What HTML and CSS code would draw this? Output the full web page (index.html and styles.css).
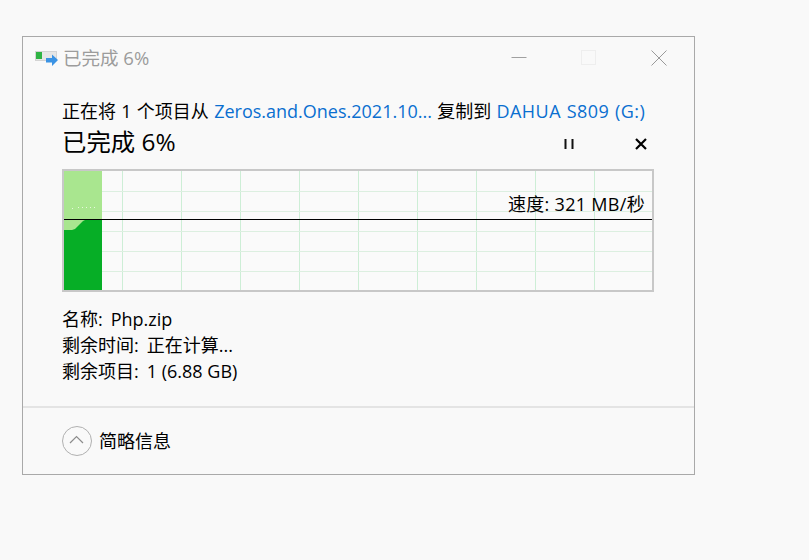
FILE: index.html
```html
<!DOCTYPE html>
<html lang="zh">
<head>
<meta charset="utf-8">
<title>已完成 6%</title>
<link rel="stylesheet" href="styles.css">
</head>
<body>
<div class="window">
  <header class="titlebar">
    <svg class="app-icon" width="24" height="18" viewBox="0 0 24 18">
      <rect x="0.5" y="1.5" width="21" height="9" fill="#e6e6e6" stroke="#d4d4d4"/>
      <rect x="1" y="2" width="6" height="7" fill="#2fb344"/>
      <path d="M11 8h6V4.500l6 5.500-6 6v-3.500h-6z" fill="#3b93e4"/>
    </svg>
    <span class="title-text">已完成 6%</span>
    <div class="win-controls">
      <svg width="16" height="16" viewBox="0 0 16 16"><path d="M0.500 7.500h15" stroke="#a0a0a0" fill="none"/></svg>
      <svg width="16" height="16" viewBox="0 0 16 16"><rect x="0.500" y="0.500" width="14" height="14" stroke="#eeeeee" fill="none"/></svg>
      <svg width="16" height="16" viewBox="0 0 16 16"><path d="M0.500 0.500l15 15M15.500 0.500l-15 15" stroke="#9a9a9a" fill="none"/></svg>
    </div>
  </header>
  <main class="body">
    <p class="copy-line">正在将 1 个项目从 <a class="link">Zeros.and.Ones.2021.10...</a> 复制到 <a class="link link-drive">DAHUA S809 (G:)</a></p>
    <div class="progress-head">
      <span class="progress-title">已完成 6%</span>
      <div class="actions">
        <svg width="12" height="12" viewBox="0 0 12 12"><path d="M2.500 1v10M9.500 1v10" stroke="#111" stroke-width="2" fill="none"/></svg>
        <svg width="14" height="14" viewBox="0 0 14 14"><path d="M2 2l10 10M12 2L2 12" stroke="#000" stroke-width="2.200" fill="none"/></svg>
      </div>
    </div>
    <div class="chart">
      <svg class="chart-svg" width="588" height="119" viewBox="0 0 588 119">
        <g fill="none">
          <path d="M58.500 0v119M117.500 0v119M176.500 0v119M235.500 0v119M294.500 0v119M353.500 0v119M412.500 0v119M471.500 0v119M530.500 0v119" stroke="#cdeed6"/>
          <path d="M0 20.500h588M0 40.500h588M0 60.500h588M0 80.500h588M0 100.500h588" stroke="#dcefe0"/>
        </g>
        <rect x="0" y="0" width="38" height="119" fill="#a9e68f"/>
        <path d="M0 59h8l3-1 2-2 2-2 2-2 2-2 2-1 9 0 7 0 1 0v70H0z" fill="#06ae26"/>
        <path d="M8 37.500h1M14 36.500h1M18 36.500h1M22 36.500h1M26 36.500h1M30 36.500h1" stroke="#e8f8dd" fill="none"/>
        <path d="M0 48.500h588" stroke="#000" fill="none"/>
      </svg>
      <span class="speed">速度: 321 MB/秒</span>
    </div>
    <dl class="details">
      <div class="row"><dt>名称:</dt><dd>Php.zip</dd></div>
      <div class="row"><dt>剩余时间:</dt><dd>正在计算...</dd></div>
      <div class="row"><dt>剩余项目:</dt><dd>1 (6.88 GB)</dd></div>
    </dl>
  </main>
  <footer class="footer">
    <button class="toggle" type="button" aria-label="简略信息">
      <svg width="30" height="30" viewBox="0 0 30 30">
        <circle cx="15" cy="15" r="14.500" fill="none" stroke="#b0b0b0"/>
        <path d="M8 17l6.500-6.500 6.500 6.500" fill="none" stroke="#8c8c8c" stroke-width="1.200"/>
      </svg>
    </button>
    <span class="toggle-label">简略信息</span>
  </footer>
</div>
</body>
</html>
```
FILE: styles.css
```css
* { box-sizing: border-box; }
html, body { margin: 0; height: 100%; }
body {
  background: #f9f9f9;
  padding: 36px 0 0 22px;
  font-family: "Open Sans", "Noto Sans CJK SC", sans-serif;
  color: #000;
  font-size: 18px;
}
.window {
  width: 673px;
  height: 439px;
  background: #f9f9f9;
  border: 1px solid #a9a9a9;
  display: flex;
  flex-direction: column;
}
.titlebar {
  height: 42px;
  display: flex;
  align-items: center;
  padding: 0 27px 0 12px;
}
.app-icon { margin-top: 2px; }
.title-text {
  margin-left: 4px;
  font-size: 18.500px;
  color: #9c9c9c;
  line-height: 24px;
}
.win-controls {
  margin-left: auto;
  display: flex;
  gap: 54px;
}
.body {
  padding: 20px 39px 0;
  flex: 1;
}
.copy-line {
  margin: 0;
  line-height: 24px;
  height: 24px;
  white-space: nowrap;
  word-spacing: 0.600px;
}
.link { color: #0a6fd0; }
.link-drive { letter-spacing: 0.450px; }
.progress-head {
  display: flex;
  align-items: flex-start;
  height: 46px;
}
.progress-title { font-size: 24.400px; line-height: 38px; }
.actions {
  margin-left: auto;
  margin-right: 7px;
  height: 42px;
  display: flex;
  align-items: center;
  gap: 59px;
}
.chart {
  position: relative;
  width: 592px;
  height: 123px;
  border: 2px solid #c8c8c8;
  background: #fafafa;
}
.chart-svg { display: block; }
.speed {
  position: absolute;
  top: 21px;
  right: 7px;
  line-height: 24px;
  letter-spacing: 0.300px;
}
.details {
  margin: 14px 0 0;
  line-height: 26px;
}
.row { display: flex; gap: 8px; }
.row dt, .row dd { margin: 0; }
.footer {
  height: 68px;
  border-top: 2px solid #e4e4e4;
  display: flex;
  align-items: center;
  padding: 0 0 0 39px;
  gap: 7px;
}
.toggle {
  background: none;
  border: 0;
  padding: 0;
  width: 30px;
  height: 30px;
}
.toggle svg { display: block; }
.toggle-label { line-height: 24px; }
```
